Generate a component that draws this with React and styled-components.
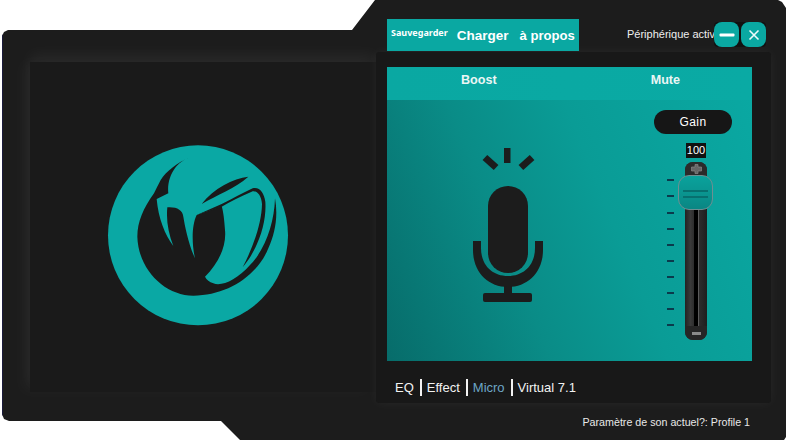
import React from 'react';
import styled, { createGlobalStyle } from 'styled-components';

const GlobalStyle = createGlobalStyle`
html, body {
  margin: 0;
  padding: 0;
  background: #fff;
}
`

const Shell = styled.div`
width: 786px;
height: 440px;
box-sizing: border-box;
display: flex;
padding: 0 15px 0 30px;
background: #1c1c1c;
box-shadow: inset 3px 0 0 #1a1a3c;
font-family: 'Liberation Sans', Arial, sans-serif;
clip-path: polygon(2px 36px, 4px 32px, 8px 30px, 352px 30px, 375px 0, 778px 0, 782px 2px, 786px 8px, 786px 437px, 784px 440px, 240px 440px, 221px 421px, 9px 421px, 4px 419px, 2px 414px);
`

const LogoPane = styled.div`
width: 346px;
height: 330px;
margin-top: 62px;
box-sizing: border-box;
padding: 68px 0 0 60px;
background: #1a1a1a;
box-shadow: 0 -8px 14px rgba(255, 255, 255, 0.05), -8px 0 14px rgba(255, 255, 255, 0.03);
`

const RightColumn = styled.div`
flex: 1;
display: flex;
flex-direction: column;
position: relative;
`

const TopBar = styled.div`
height: 33px;
margin-top: 19px;
padding-left: 11px;
display: flex;
align-items: flex-start;
`

const Tabs = styled.div`
width: 192px;
height: 32px;
background: #0aa8a2;
position: relative;
display: flex;
align-items: center;
color: #fff;
font-weight: bold;
`

const Tab = styled.span`
font-size: ${props => props.size}px;
font-family: ${props => props.small ? "'Noto Sans', sans-serif" : "'Liberation Sans', sans-serif"};
margin-left: ${props => props.left}px;
margin-top: ${props => props.small ? -5 : 0}px;
white-space: nowrap;
`

const Status = styled.div`
width: 87px;
margin-left: 48px;
margin-top: 8px;
white-space: nowrap;
color: #eee;
font-size: 11px;
line-height: 15px;
`

const WinButtons = styled.div`
display: flex;
gap: 2px;
margin-top: 3px;
background: #111;
border-radius: 4px;
`

const WinButton = styled.button`
width: 25px;
height: 25px;
padding: 0;
border: none;
border-radius: 8px;
background: #0aa8a2;
display: flex;
align-items: center;
justify-content: center;
`

const Panel = styled.div`
height: 351px;
box-sizing: border-box;
padding: 15px 19px 0 11px;
background: #181818;
border-radius: 3px;
box-shadow: 0 0 12px rgba(255, 255, 255, 0.05);
display: flex;
flex-direction: column;
`

const BoostHeader = styled.div`
height: 33px;
background: linear-gradient(90deg, #0aa8a2, #0aaaa4);
font-size: 12.6px;
font-weight: bold;
position: relative;
display: flex;
align-items: center;
padding-bottom: 7px;
box-sizing: border-box;
`

const HeaderLabel = styled.span`
margin-left: ${props => props.left}px;
color: #eaf6f5;
`

const Body = styled.div`
height: 261px;
box-sizing: border-box;
padding: 10px 20px 0 63px;
display: flex;
justify-content: space-between;
background: linear-gradient(68deg, #076c6a 0%, #0a8c87 35%, #0a9c96 60%, #0aa8a2 100%);
`

const MicBox = styled.div`
margin-top: 20px;
`

const GainColumn = styled.div`
width: 78px;
display: flex;
flex-direction: column;
align-items: center;
`

const GainPill = styled.div`
width: 78px;
height: 24px;
border-radius: 12px;
background: #161616;
color: #fff;
font-size: 12px;
letter-spacing: 0.4px;
display: flex;
align-items: center;
justify-content: center;
`

const ValueBadge = styled.div`
margin-top: 9px;
margin-left: 6px;
width: 20px;
height: 15px;
background: #111;
color: #fff;
font-size: 11px;
line-height: 15px;
text-align: center;
`

const Slider = styled.div`
position: relative;
margin-top: 4px;
margin-left: 6px;
width: 22px;
height: 178px;
border-radius: 8px;
background: linear-gradient(90deg, #222 0%, #3a3a3a 25%, #2e2e2e 40%, #000 41%, #000 58%, #5c5c5c 59%, #5c5c5c 64%, #2c2c2c 66%, #1e1e1e 100%);
`

const SliderCap = styled.div`
position: absolute;
left: 0;
right: 0;
height: 14px;
background: #2b2b2b;
display: flex;
align-items: center;
justify-content: center;
${props => props.top ? 'top: 0; border-radius: 8px 8px 0 0;' : 'bottom: 0; border-radius: 0 0 8px 8px; background: #262626;'}
`

const CapMark = styled.div`
width: 9px;
height: 3px;
background: #8a8a8a;
`

const Thumb = styled.div`
position: absolute;
left: -7px;
top: 13px;
width: 35px;
height: 35px;
box-sizing: border-box;
border: 1px solid #6d8f92;
border-radius: 11px;
background: linear-gradient(180deg, #0aa29c 0%, #0a948f 55%, #0a8683 100%);
display: flex;
flex-direction: column;
align-items: center;
justify-content: center;
gap: 4px;
padding-top: 2px;
`

const ThumbLine = styled.div`
width: 25px;
height: 2px;
background: #07706f;
`

const Tick = styled.div`
position: absolute;
left: -18px;
top: ${props => props.top}px;
width: 7px;
height: 2px;
background: #0b3a4c;
`

const TabNav = styled.div`
margin-top: 17px;
padding-left: 8px;
display: flex;
align-items: center;
color: #f2f2f2;
font-size: 13px;
line-height: 19px;
`

const NavItem = styled.span`
color: ${props => props.active ? '#6da6c6' : '#f2f2f2'};
`

const NavBar = styled.span`
width: 2px;
height: 17px;
background: #f2f2f2;
margin: 0 5px 0 6px;
`

const Footer = styled.div`
margin-top: 12px;
padding-right: 21px;
text-align: right;
color: #e8e8e8;
font-size: 10.7px;
line-height: 14px;
`

const Logo = () => (
  <svg width="216" height="210" viewBox="0 0 648 630">
    <circle cx="324" cy="316" r="270" fill="#0aa8a4" />
    <path
      fill="#1a1a1a"
      d="M300 82 C262 98 228 125 212 150 C204 165 198 178 192 190 C160 235 142 275 142 320 C145 420 225 497 310 497 C410 497 500 440 535 355 C555 310 565 260 555 205 C553 280 525 360 480 405 C440 450 395 470 370 460 C358 456 350 450 345 440 C385 400 410 350 405 300 C403 270 400 245 395 228 L320 255 C305 285 305 340 315 385 C295 340 285 290 280 260 C278 240 260 230 232 232 C228 270 235 310 250 348 C225 315 205 265 200 207 L235 190 C232 165 238 135 258 110 C270 97 285 88 300 82 Z"
    />
    <path
      fill="#1a1a1a"
      d="M320 255 L395 222 C430 205 460 188 488 175 C510 170 522 190 526 215 C530 270 510 350 458 412 C490 350 515 280 516 222 C514 195 500 180 485 185 C450 200 420 215 395 230 Z"
    />
    <path fill="#1a1a1a" d="M475 140 C430 145 370 175 335 222 C380 195 435 175 475 140 Z" />
  </svg>
);

const Mic = () => (
  <svg width="120" height="180" viewBox="0 0 120 180">
    <g fill="#1c1c1c">
      <rect x="54" y="18" width="6.5" height="15" />
      <rect x="37" y="25" width="7" height="15" transform="rotate(-48 40.5 32.5)" />
      <rect x="73" y="25" width="7" height="15" transform="rotate(48 76.5 32.5)" />
      <rect x="38" y="56" width="40" height="87" rx="20" />
      <rect x="33" y="163" width="49" height="9" rx="2" />
      <rect x="54" y="155" width="8" height="10" />
      <path d="M23 111 H31 V118 C31 135 42 146 58 146 C74 146 85 135 85 118 V111 H93 V120 C93 142 78 157 58 157 C38 157 23 142 23 120 Z" />
    </g>
  </svg>
);

const ticks = [17, 33, 50, 66, 82, 98, 114, 130, 146, 162];

export default function App() {
  return (
    <>
      <GlobalStyle />
      <Shell>
        <LogoPane>
          <Logo />
        </LogoPane>
        <RightColumn>
          <TopBar>
            <Tabs>
              <Tab small size={9} left={4}>Sauvegarder</Tab>
              <Tab size={13.5} left={9}>Charger</Tab>
              <Tab size={13.1} left={11}>à propos</Tab>
            </Tabs>
            <Status>Périphérique activ</Status>
            <WinButtons>
              <WinButton>
                <svg width="16" height="4" viewBox="0 0 16 4"><rect width="15" height="3" x="0.5" y="0.5" fill="#fff" rx="1" /></svg>
              </WinButton>
              <WinButton>
                <svg width="12" height="12" viewBox="0 0 12 12"><path d="M1.5 1.5 L10.5 10.5 M10.5 1.5 L1.5 10.5" stroke="#eefafa" strokeWidth="1.6" /></svg>
              </WinButton>
            </WinButtons>
          </TopBar>
          <Panel>
            <BoostHeader>
              <HeaderLabel left={74}>Boost</HeaderLabel>
              <HeaderLabel left={154}>Mute</HeaderLabel>
            </BoostHeader>
            <Body>
              <MicBox>
                <Mic />
              </MicBox>
              <GainColumn>
                <GainPill>Gain</GainPill>
                <ValueBadge>100</ValueBadge>
                <Slider>
                  <SliderCap top>
                    <svg width="11" height="10" viewBox="0 0 11 10"><path d="M4 0.5 H7 V3 H10.5 V7 H7 V9.5 H4 V7 H0.5 V3 H4 Z" fill="#666" stroke="#888" strokeWidth="0.7" /></svg>
                  </SliderCap>
                  <SliderCap>
                    <CapMark />
                  </SliderCap>
                  {ticks.map(t => <Tick key={t} top={t} />)}
                  <Thumb>
                    <ThumbLine />
                    <ThumbLine />
                  </Thumb>
                </Slider>
              </GainColumn>
            </Body>
            <TabNav>
              <NavItem>EQ</NavItem>
              <NavBar />
              <NavItem>Effect</NavItem>
              <NavBar />
              <NavItem active>Micro</NavItem>
              <NavBar />
              <NavItem>Virtual 7.1</NavItem>
            </TabNav>
          </Panel>
          <Footer>Paramètre de son actuel?: Profile 1</Footer>
        </RightColumn>
      </Shell>
    </>
  );
}
